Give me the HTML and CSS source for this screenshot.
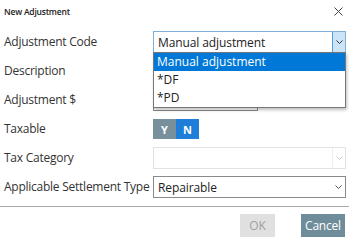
FILE: index.html
```html
<!DOCTYPE html>
<html lang="en">
<head>
    <meta charset="UTF-8">
    <title>New Adjustment</title>
    <link rel="stylesheet" href="styles.css">
</head>
<body>
    <div class="dialog">
        <!-- title bar -->
        <header class="dialog-header">
            <span class="dialog-title">New Adjustment</span>
            <svg class="dialog-close" width="9" height="9" viewBox="0 0 9 9"><path d="M0.5 0.5 L8.5 8.5 M8.5 0.5 L0.5 8.5" stroke="#444" stroke-width="1"/></svg>
        </header>

        <!-- form -->
        <div class="form">
            <div class="row">
                <label class="row-label">Adjustment Code</label>
                <div class="select select-open">
                    <span class="select-value">Manual adjustment</span>
                    <span class="select-arrow">
                        <svg width="7" height="4" viewBox="0 0 7 4"><path d="M0.5 0.5 L3.5 3.5 L6.5 0.5" fill="none" stroke="#333" stroke-width="1"/></svg>
                    </span>
                    <ul class="dropdown">
                        <li class="dropdown-item active">Manual adjustment</li>
                        <li class="dropdown-item">*DF</li>
                        <li class="dropdown-item">*PD</li>
                    </ul>
                </div>
            </div>
            <div class="row">
                <label class="row-label">Description</label>
                <div class="input"></div>
            </div>
            <div class="row">
                <label class="row-label">Adjustment $</label>
                <div class="input input-short"></div>
            </div>
            <div class="row">
                <label class="row-label">Taxable</label>
                <div class="toggle">
                    <span class="toggle-btn">Y</span>
                    <span class="toggle-btn on">N</span>
                </div>
            </div>
            <div class="row">
                <label class="row-label">Tax Category</label>
                <div class="select select-disabled">
                    <span class="select-value"></span>
                    <span class="select-arrow">
                        <svg width="7" height="4" viewBox="0 0 7 4"><path d="M0.5 0.5 L3.5 3.5 L6.5 0.5" fill="none" stroke="#c8c8c8" stroke-width="1"/></svg>
                    </span>
                </div>
            </div>
            <div class="row">
                <label class="row-label">Applicable Settlement Type</label>
                <div class="select">
                    <span class="select-value">Repairable</span>
                    <span class="select-arrow">
                        <svg width="7" height="4" viewBox="0 0 7 4"><path d="M0.5 0.5 L3.5 3.5 L6.5 0.5" fill="none" stroke="#555" stroke-width="1"/></svg>
                    </span>
                </div>
            </div>
        </div>

        <!-- buttons -->
        <footer class="dialog-footer">
            <button class="btn btn-disabled">OK</button>
            <button class="btn btn-cancel">Cancel</button>
        </footer>
    </div>
</body>
</html>
```

FILE: styles.css
```css
* {
    margin: 0;
    padding: 0;
    box-sizing: border-box;
}

body {
    background: #fff;
    font-family: 'Open Sans', 'Noto Sans', sans-serif;
    color: #333;
}

.dialog {
    width: 349px;
    height: 243px;
}

/* title bar */
.dialog-header {
    height: 24px;
    display: flex;
    align-items: center;
    justify-content: space-between;
    padding: 0 6px 2px 4px;
}

.dialog-title {
    font-size: 8.5px;
    font-weight: 600;
    color: #222;
    letter-spacing: -0.2px;
}

/* form */
.form {
    padding: 7px 3px 0 4px;
    display: flex;
    flex-direction: column;
}

.row {
    height: 29px;
    display: flex;
    align-items: flex-start;
}

.row-label {
    width: 149px;
    font-size: 12px;
    line-height: 22px;
    color: #333;
    letter-spacing: -0.25px;
}

.select {
    position: relative;
    width: 193px;
    height: 22px;
    border: 1px solid #8a8a8a;
    display: flex;
    align-items: center;
    font-size: 12px;
    color: #222;
}

.select-value {
    flex: 1;
    padding-left: 4px;
    letter-spacing: -0.1px;
}

.select-arrow {
    width: 13px;
    height: 20px;
    display: flex;
    align-items: center;
    justify-content: center;
}

.select-open {
    border-color: #7fb0dc;
}

.select-open .select-arrow {
    background: #cce4f7;
    border-left: 1px solid #5b9bd5;
    width: 13px;
}

.select-disabled {
    border-color: #e2e2e2;
}

.select-disabled .select-arrow {
    border-left: 1px solid #eee;
}

/* dropdown list */
.dropdown {
    position: absolute;
    left: -1px;
    top: 20px;
    width: 193px;
    list-style: none;
    background: #fff;
    border: 1px solid #777;
    box-shadow: 1px 2px 3px rgba(0,0,0,0.25);
    z-index: 5;
}

.dropdown-item {
    height: 18px;
    line-height: 18px;
    padding-left: 3px;
    font-size: 12px;
    color: #222;
}

.dropdown-item.active {
    background: #0078d7;
    color: #fff;
}

.input {
    width: 193px;
    height: 22px;
    border: 1px solid #8a8a8a;
}

.input-short {
    width: 105px;
}

/* Y / N toggle */
.toggle {
    display: flex;
    height: 20px;
    margin-top: 1px;
}

.toggle-btn {
    width: 23px;
    display: flex;
    align-items: center;
    justify-content: center;
    font-size: 11px;
    font-weight: 700;
    color: #fff;
    background: #78909c;
}

.toggle-btn.on {
    background: #1e7ed8;
}

/* footer */
.dialog-footer {
    margin-top: 1px;
    border-top: 1px solid #aaa;
    padding: 7px 4px 0 0;
    display: flex;
    justify-content: flex-end;
    gap: 26px;
}

.btn {
    height: 23px;
    border: none;
    font-family: 'Open Sans', 'Noto Sans', sans-serif;
    font-size: 12px;
    letter-spacing: -0.2px;
}

.btn-disabled {
    width: 35px;
    background: #e0e0e0;
    color: #a0a0a0;
}

.btn-cancel {
    width: 44px;
    background: #6e8c99;
    color: #fff;
}
```
